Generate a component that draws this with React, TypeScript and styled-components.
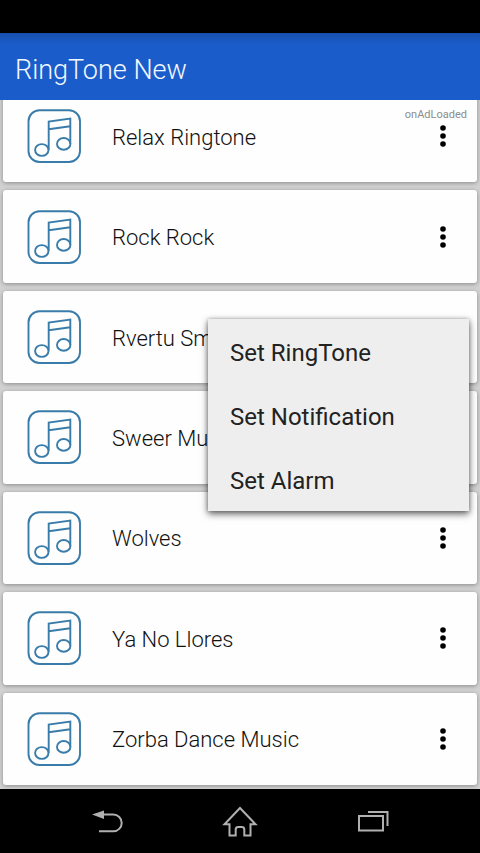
import React from "react";
import styled, { createGlobalStyle } from "styled-components";

const GlobalStyle = createGlobalStyle`
  *, *::before, *::after { box-sizing: border-box; }
  body {
    margin: 0;
    background: #000;
    font-family: Roboto, "Noto Sans", sans-serif;
  }
  button { font: inherit; border: 0; padding: 0; background: none; cursor: pointer; }
`;

const Screen = styled.div`
  display: flex;
  flex-direction: column;
  min-height: 100vh;
  background: #d2d2d2;
`;

const StatusBar = styled.div`
  height: 33px;
  flex: none;
  background: #000;
`;

const AppBar = styled.header`
  display: flex;
  flex: none;
  align-items: center;
  height: 67px;
  padding: 6px 15px 0;
  z-index: 1;
  background: linear-gradient(#174fae, #1b5ccb 12px);
`;

const Title = styled.h1`
  margin: 0;
  font-size: 27px;
  font-weight: 300;
  line-height: 32px;
  color: #f2f8ff;
`;

const Content = styled.main`
  position: relative;
  display: flex;
  flex: 1;
  flex-direction: column;
`;

const AdStatus = styled.span`
  position: absolute;
  top: 7px;
  right: 13px;
  font-size: 11px;
  line-height: 16px;
  color: #8c8c8c;
`;

const List = styled.ul`
  display: flex;
  flex: 1;
  flex-direction: column;
  gap: 8px;
  margin: -10px 0 0;
  padding: 0 3px 4px;
  list-style: none;
`;

const Card = styled.li`
  position: relative;
  display: flex;
  flex: 1;
  align-items: center;
  min-height: 92px;
  padding: 0 24px;
  border-radius: 3px;
  background: #fefefe;
  box-shadow: 0 1px 4px rgba(0, 0, 0, 0.35);
`;

const SongIcon = styled.svg`
  flex: none;
  width: 54px;
  height: 54px;
  fill: none;
  stroke: #3a7ca9;
  stroke-width: 1.9;
`;

const SongName = styled.span`
  flex: 1;
  margin-left: 31px;
  padding-top: 3px;
  font-size: 22px;
  font-weight: 300;
  line-height: 28px;
  white-space: nowrap;
  color: #111;
`;

const MoreButton = styled.button`
  display: flex;
  align-items: center;
  justify-content: center;
  width: 20px;
  height: 40px;
`;

const Menu = styled.div`
  position: absolute;
  top: 28px;
  right: 8px;
  z-index: 2;
  display: flex;
  flex-direction: column;
  width: 261px;
  background: #eee;
  box-shadow: 0 3px 7px rgba(0, 0, 0, 0.6), 0 0 4px rgba(0, 0, 0, 0.25);
`;

const MenuItem = styled.button`
  height: 64px;
  padding: 4px 22px 0;
  font-size: 24px;
  line-height: 28px;
  text-align: left;
  color: #222;
`;

const NavBar = styled.nav`
  display: grid;
  flex: none;
  grid-template-columns: repeat(3, 1fr);
  height: 64px;
  padding: 0 40px;
  background: #000;
`;

const NavButton = styled.button`
  display: flex;
  align-items: center;
  justify-content: center;

  svg {
    width: 40px;
    height: 40px;
    fill: none;
    stroke: #b0b0b0;
    stroke-width: 2;
  }
`;

const songs = [
  "Relax Ringtone",
  "Rock Rock",
  "Rvertu Smart",
  "Sweer Music",
  "Wolves",
  "Ya No Llores",
  "Zorba Dance Music",
];

const openSong = "Rvertu Smart";

function MusicNotes() {
  return (
    <SongIcon viewBox="0 0 54 54" aria-hidden="true">
      <rect x="1.5" y="1.3" width="51.5" height="51.7" rx="11" />
      <path d="M21.7 40.8V12.6L43.3 9.6V34.8M21.7 20.2L43.3 17.2" />
      <ellipse cx="14.8" cy="41" rx="6.7" ry="5.9" />
      <ellipse cx="36.7" cy="34.9" rx="6.7" ry="5.9" />
    </SongIcon>
  );
}

function SongCard({ name, open }: { name: string; open: boolean }) {
  return (
    <Card>
      <MusicNotes />
      <SongName>{name}</SongName>
      <MoreButton aria-label={`Options for ${name}`} aria-haspopup="menu" aria-expanded={open}>
        <svg width="8" height="24" viewBox="0 0 8 24" aria-hidden="true">
          <circle cx="4" cy="4" r="2.8" />
          <circle cx="4" cy="12" r="2.8" />
          <circle cx="4" cy="20" r="2.8" />
        </svg>
      </MoreButton>
      {open && (
        <Menu role="menu">
          <MenuItem role="menuitem">Set RingTone</MenuItem>
          <MenuItem role="menuitem">Set Notification</MenuItem>
          <MenuItem role="menuitem">Set Alarm</MenuItem>
        </Menu>
      )}
    </Card>
  );
}

export default function App() {
  return (
    <>
      <GlobalStyle />
      <Screen>
        <StatusBar />
        <AppBar>
          <Title>RingTone New</Title>
        </AppBar>
        <Content>
          <List>
            {songs.map((name) => (
              <SongCard key={name} name={name} open={name === openSong} />
            ))}
          </List>
          <AdStatus>onAdLoaded</AdStatus>
        </Content>
        <NavBar>
          <NavButton aria-label="Back">
            <svg viewBox="0 0 40 40" aria-hidden="true">
              <path d="M16 13.5H26.3a8.4 8.4 0 0 1 0 16.8H12" />
              <path d="M5 13.6L17 9.4V18Z" fill="#b0b0b0" stroke="none" />
            </svg>
          </NavButton>
          <NavButton aria-label="Home">
            <svg viewBox="0 0 40 40" aria-hidden="true">
              <path d="M20 7L4.5 23.3H9.5V34.5H15.7V28.5Q15.7 26 18 26H22Q24.3 26 24.3 28.5V34.5H30.5V23.3H35.5Z" />
            </svg>
          </NavButton>
          <NavButton aria-label="Recent apps">
            <svg viewBox="0 0 40 40" aria-hidden="true">
              <rect x="6" y="15" width="24" height="14.5" />
              <path d="M15 11H34.5V25" />
            </svg>
          </NavButton>
        </NavBar>
      </Screen>
    </>
  );
}
